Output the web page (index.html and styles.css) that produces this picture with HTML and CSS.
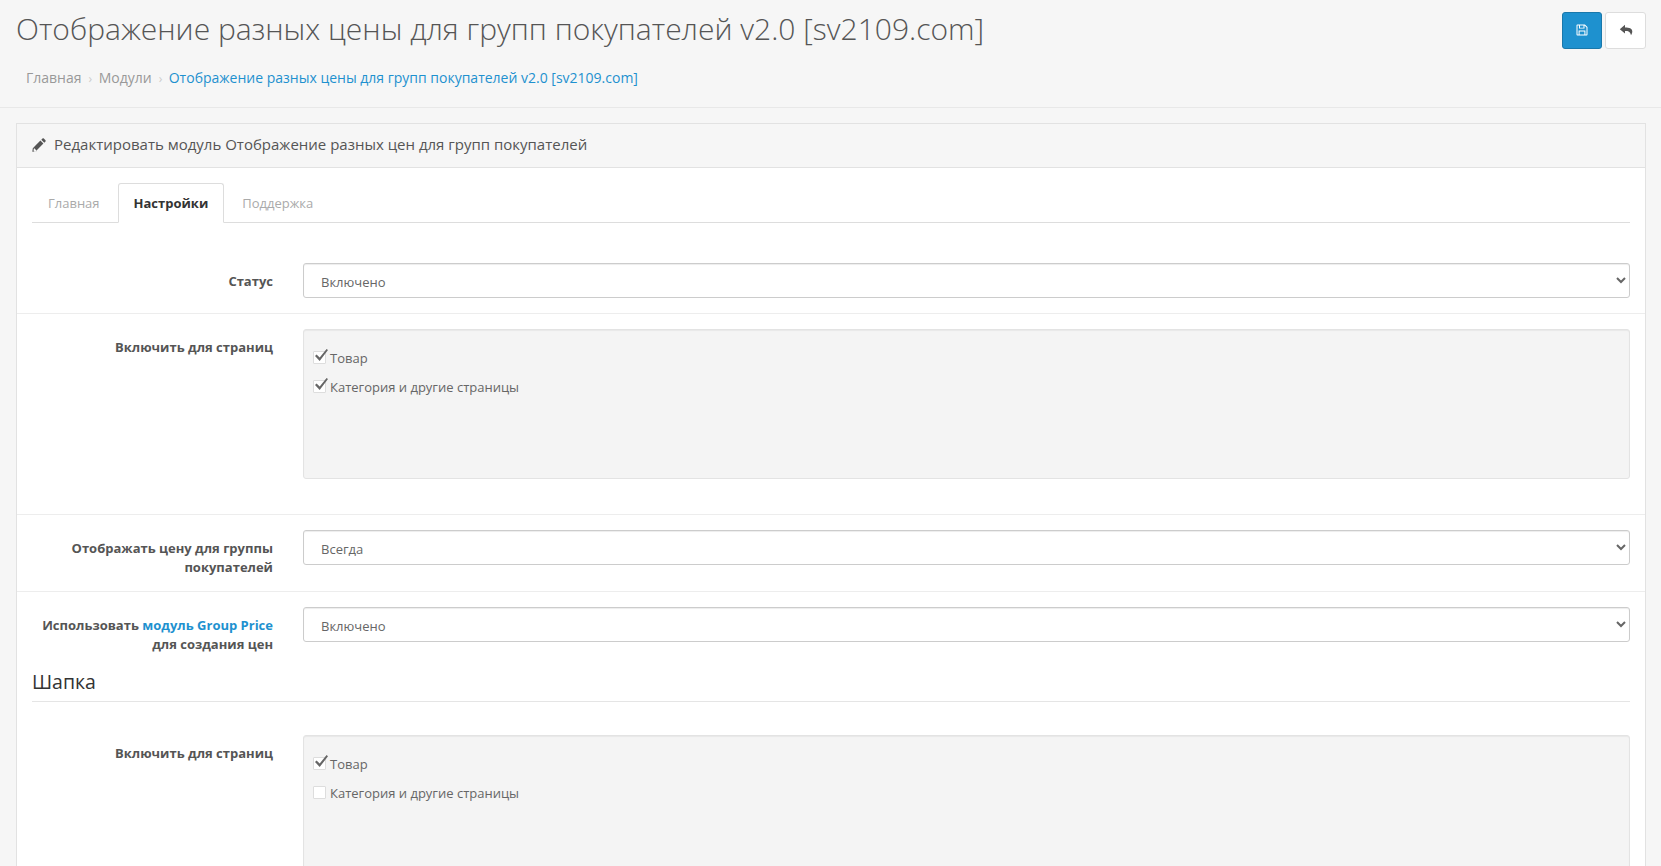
FILE: index.html
```html
<!DOCTYPE html>
<html lang="ru">
<head>
<meta charset="utf-8">
<title>Отображение разных цены</title>
<link rel="stylesheet" href="styles.css">
</head>
<body>
<header class="page-header">
  <div class="title-row">
    <h1>Отображение разных цены для групп покупателей v2.0 [sv2109.com]</h1>
    <div class="actions">
      <button class="btn btn-primary" type="button" aria-label="Сохранить">
        <svg width="12" height="12" viewBox="0 0 12 12"><path fill="#fff" fill-rule="evenodd" d="M1.400.5h7.500L11.500 3.100V10.600a.9.9 0 0 1-.9.9H1.400a.9.9 0 0 1-.9-.9V1.400a.9.9 0 0 1 .9-.9zM1.500 1.500V10.500H2.600V6.500H9.400V10.500H10.500V3.500L8.500 1.500V4.600H3V1.500zM4 1.500V3.700H7.500V1.500zM3.600 7.500V10.500H8.400V7.500z"/></svg>
      </button>
      <button class="btn btn-default" type="button" aria-label="Назад">
        <svg class="back" width="14" height="13" viewBox="0 0 14 13"><path fill="#555" d="M6 .8 .8 5.200 6 9.600V6.900c3.200 0 5.200.4 6 4.300.9-1.200 1.300-2.500 1.300-3.600C13.300 4.400 10.300 3.500 6 3.500z"/></svg>
      </button>
    </div>
  </div>
  <ul class="breadcrumb">
    <li><a href="#">Главная</a></li>
    <li><a href="#">Модули</a></li>
    <li><a href="#" class="current">Отображение разных цены для групп покупателей v2.0 [sv2109.com]</a></li>
  </ul>
</header>
<main class="panel">
  <div class="panel-heading">
    <svg class="pencil" width="14" height="14" viewBox="0 0 14 14"><path fill="#555" fill-rule="evenodd" d="M3.800 13.200 .3 13.700.8 10.200 8.400 2.600l3 3zM2.300 10.300l-.5.500-.3 1.700 1 1 1.700-.3.500-.5zM9.300 1.700 10.500.5c.4-.3.900-.3 1.300 0l1.700 1.700c.3.400.3.900 0 1.300L12.300 4.700z"/></svg>
    <h3>Редактировать модуль Отображение разных цен для групп покупателей</h3>
  </div>
  <div class="panel-body">
    <ul class="tabs">
      <li><a href="#">Главная</a></li>
      <li class="active"><a href="#">Настройки</a></li>
      <li><a href="#">Поддержка</a></li>
    </ul>
    <form class="form">
      <div class="form-group first">
        <label class="control-label">Статус</label>
        <div class="control"><select class="form-control"><option>Включено</option></select></div>
      </div>
      <div class="form-group tall">
        <label class="control-label">Включить для страниц</label>
        <div class="control">
          <div class="well">
            <label class="check"><input type="checkbox" checked><span>Товар</span></label>
            <label class="check"><input type="checkbox" checked><span>Категория и другие страницы</span></label>
          </div>
        </div>
      </div>
      <div class="form-group">
        <label class="control-label">Отображать цену для группы покупателей</label>
        <div class="control"><select class="form-control"><option>Всегда</option></select></div>
      </div>
      <div class="form-group last">
        <label class="control-label">Использовать <a href="#">модуль Group Price</a> для создания цен</label>
        <div class="control"><select class="form-control"><option>Включено</option></select></div>
      </div>
      <fieldset class="section">
        <legend>Шапка</legend>
        <div class="form-group first">
          <label class="control-label">Включить для страниц</label>
          <div class="control">
            <div class="well">
              <label class="check"><input type="checkbox" checked><span>Товар</span></label>
              <label class="check"><input type="checkbox"><span>Категория и другие страницы</span></label>
            </div>
          </div>
        </div>
      </fieldset>
    </form>
  </div>
</main>
</body>
</html>
```

FILE: styles.css
```css
* { box-sizing: border-box; }
html, body { height: 866px; overflow: hidden; }
body {
  margin: 0;
  background: #f6f6f6;
  color: #666;
  font-family: "Open Sans", sans-serif;
  font-size: 13px;
  line-height: 1.42857;
}
a { text-decoration: none; color: #1e91cf; }

.page-header {
  height: 108px;
  padding: 0 15px 0 16px;
  border-bottom: 1px solid #e8e8e8;
}
.title-row { display: flex; justify-content: space-between; align-items: flex-start; }
h1 {
  margin: 10px 0 0;
  font-size: 30px;
  font-weight: 300;
  line-height: 38px;
  color: #555;
}
.actions { display: flex; gap: 3px; margin-top: 12px; }
.btn {
  width: 40px;
  height: 37px;
  padding: 0 0 1px;
  border: 1px solid;
  border-radius: 3px;
  display: flex;
  align-items: center;
  justify-content: center;
}
.btn-primary { background: #1e91cf; border-color: #1978ab; }
.btn-default { width: 41px; background: #fff; border-color: #ddd; }

.breadcrumb {
  display: flex;
  list-style: none;
  margin: 19px 0 0;
  padding: 0 0 0 10px;
  font-size: 14px;
  line-height: 20px;
}
.breadcrumb a { color: #999; }
.breadcrumb a.current { color: #1e91cf; }
.breadcrumb li + li::before {
  content: "›";
  color: #ccc;
  font-size: 12px;
  padding: 0 6.5px 0 7px;
}

.panel {
  margin: 15px 15px 0 16px;
  background: #fff;
  border: 1px solid #e2e2e2;
  border-bottom: 0;
}
.panel-heading {
  height: 44px;
  padding: 0 15px 2px;
  display: flex;
  align-items: center;
  gap: 8px;
  background: #f6f6f6;
  border-bottom: 1px solid #e2e2e2;
}
.panel-heading h3 {
  margin: 0;
  font-size: 15px;
  font-weight: 400;
  color: #555;
}
.pencil { flex: none; }
.panel-body { padding: 15px 15px 0; }

.tabs {
  display: flex;
  list-style: none;
  margin: 0 0 25px;
  padding: 0;
  height: 40px;
  border-bottom: 1px solid #ddd;
}
.tabs li { margin-right: 2px; height: 40px; }
.tabs a {
  display: block;
  height: 39px;
  padding: 10px 15px 0;
  color: #aaa;
  border: 1px solid transparent;
  border-radius: 3px 3px 0 0;
}
.tabs .active a {
  height: 40px;
  color: #333;
  font-weight: 700;
  background: #fff;
  border-color: #ddd #ddd #fff;
}

.form-group {
  display: grid;
  grid-template-columns: 241px 1fr;
  column-gap: 30px;
  margin: 0 -15px;
  padding: 15px;
  border-top: 1px solid #ededed;
}
.form-group.first { border-top: 0; }
.form-group.tall { padding-bottom: 35px; }
.form-group.last { padding-bottom: 0; }
.control-label {
  text-align: right;
  font-weight: 700;
  color: #555;
  padding-top: 9px;
}
.form-control {
  display: block;
  width: 100%;
  height: 35px;
  padding: 8px 13px;
  font: 13px/19px "Open Sans", sans-serif;
  color: #666;
  background: #fff;
  border: 1px solid #ccc;
  border-radius: 3px;
  box-shadow: inset 0 1px 1px rgba(0, 0, 0, .075);
}
.well {
  height: 150px;
  padding: 16px 9px;
  background: #f4f4f4;
  border: 1px solid #e3e3e3;
  border-radius: 3px;
  box-shadow: inset 0 1px 1px rgba(0, 0, 0, .05);
}
.check {
  display: flex;
  align-items: flex-start;
  height: 19px;
  margin: 0 0 10px;
  color: #666;
}
.check span { margin-top: 3px; margin-left: 4px; }
.check input {
  appearance: none;
  position: relative;
  flex: none;
  width: 13px;
  height: 13px;
  margin: 5px 0 0;
  background: #fff;
  border: 1px solid #ddd;
  border-radius: 1px;
}
.check input:checked::after {
  content: "";
  position: absolute;
  left: 1px;
  top: -3px;
  width: 13px;
  height: 12px;
  background: #666;
  clip-path: polygon(0 58%, 12% 46%, 36% 70%, 89% 0, 100% 9%, 36% 100%);
}

.section { border: 0; margin: 0; padding: 0; }
.section legend {
  display: block;
  width: 100%;
  padding: 15px 0 5px;
  margin: 0 0 18px;
  font-size: 19.5px;
  font-weight: 400;
  line-height: 1.42857;
  color: #333;
  border-bottom: 1px solid #e5e5e5;
}
```
